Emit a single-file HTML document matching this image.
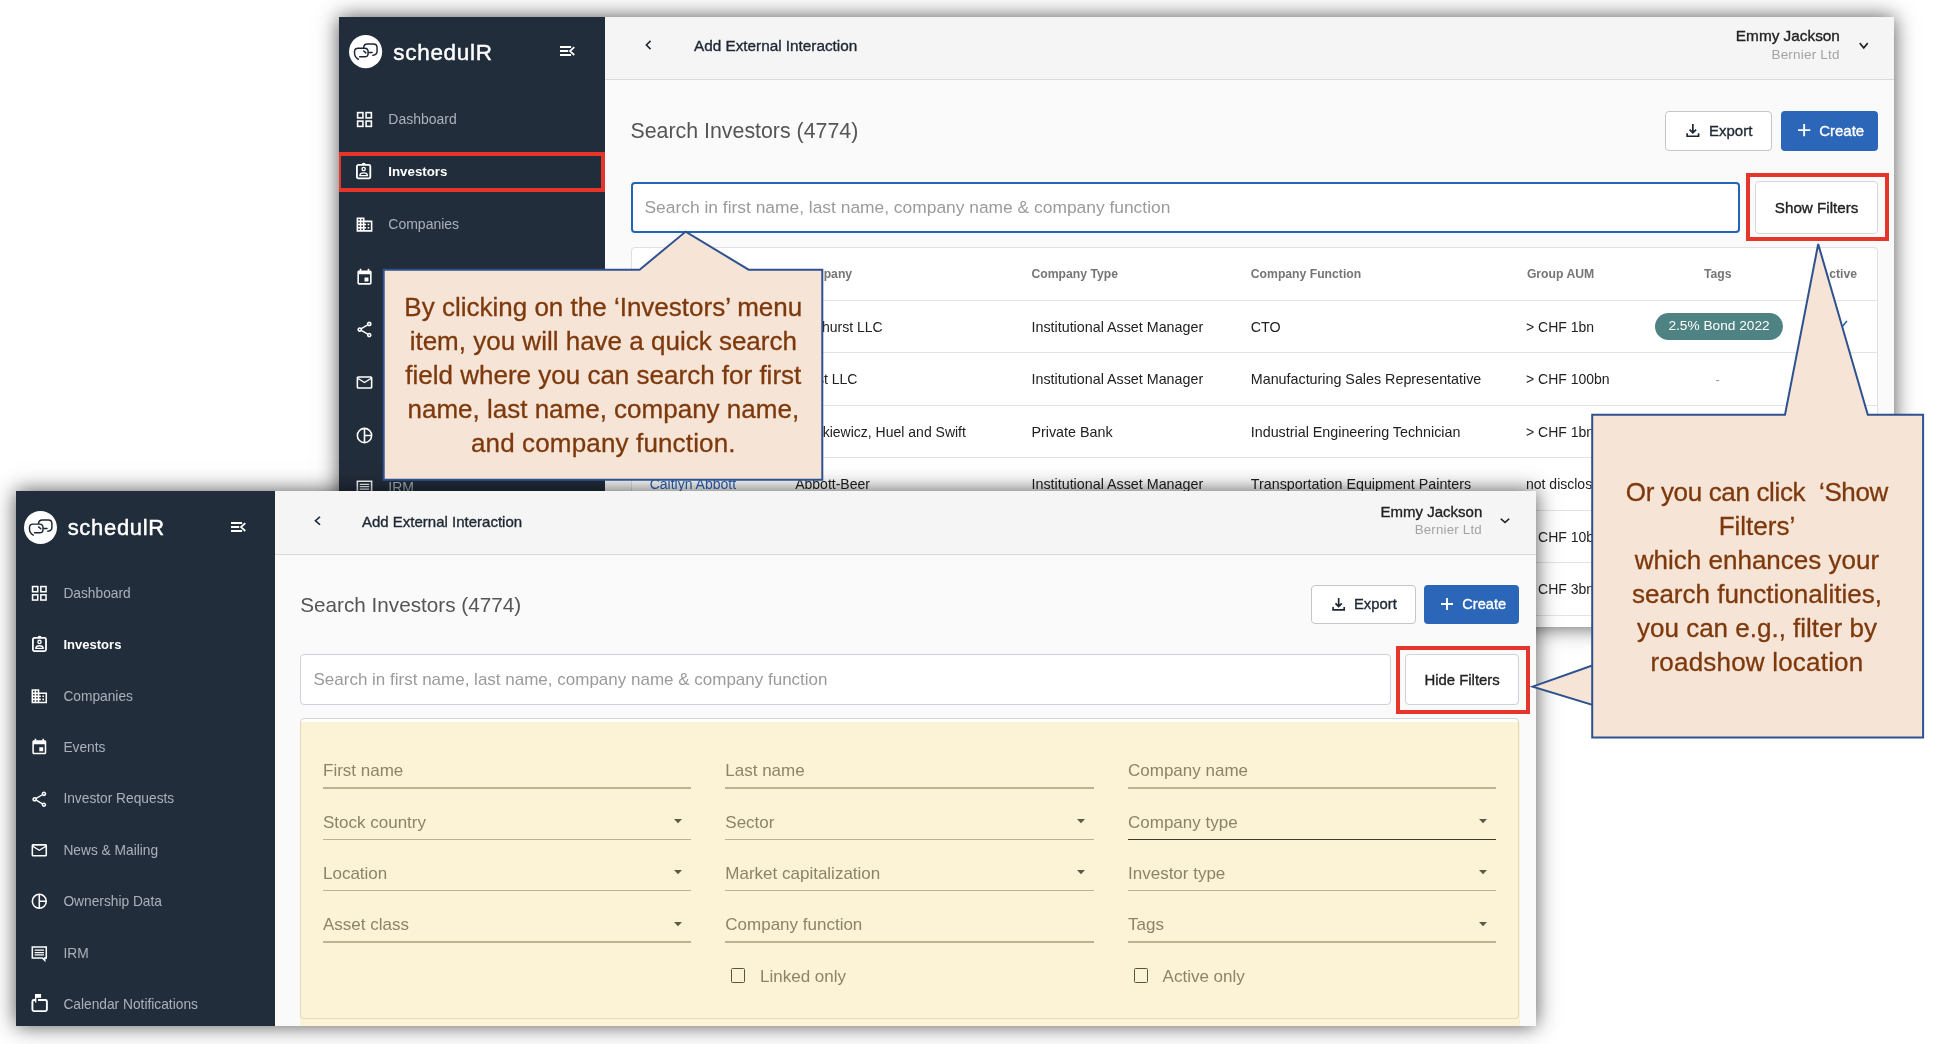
<!DOCTYPE html>
<html><head><meta charset="utf-8">
<style>
*{margin:0;padding:0;box-sizing:border-box}
html,body{width:1936px;height:1044px;overflow:hidden;background:#fff;font-family:"Liberation Sans",sans-serif}
.shot{position:absolute;overflow:hidden}
.inner{position:absolute;width:1936px;height:1044px;will-change:transform}
.a{position:absolute}
.t{position:absolute;line-height:1;white-space:nowrap;top:calc(var(--b)*1px - .8465em)}
.r{transform:translateX(-100%)}
.c{transform:translateX(-50%)}
.med{-webkit-text-stroke:.35px currentColor}
.side{background:#222d3b}
.nav{color:#aab1bb}
.navw{color:#fff;font-weight:bold}
.ico{position:absolute;overflow:visible}
.hdr{background:#f4f4f4;border-bottom:1px solid #dcdcdc}
.btn{position:absolute;border-radius:4px}
.th{font-weight:bold;color:#757575;font-size:12px}
.td{color:#212121;font-size:14px}
.rowline{position:absolute;height:1px;background:#e3e3e3}
.lbl{color:#8c8468;font-size:17px}
.ul{position:absolute;height:1px;background:#c9bf9f}
.red{position:absolute;border:4px solid #e5332a}
.callout{position:absolute;color:#7d390c;-webkit-text-stroke:.3px #7d390c;will-change:transform;font-size:26px;text-align:center;line-height:34px;font-family:"Liberation Sans",sans-serif}
</style></head>
<body>

<!-- ============ TOP SCREENSHOT ============ -->
<div class="shot" id="top" style="left:339px;top:17px;width:1555px;height:610px;box-shadow:0 0 20px rgba(0,0,0,.68);overflow:visible">
<div style="position:absolute;inset:0;overflow:hidden">
<div class="inner" style="left:-339px;top:-17px">
  <div class="a" style="left:604.5px;top:17px;width:1290px;height:610px;background:#fafafa"></div>
  <div class="a side" style="left:339px;top:17px;width:265.5px;height:610px"></div>
  <!--TOPSIDE-->
  <svg class="ico" style="left:348.6px;top:35.2px" width="33.2" height="33.2" viewBox="0 0 33 33"><circle cx="16.5" cy="16.5" r="16.5" fill="#fff"/><g fill="none" stroke="#1c2633" stroke-width="1.45" stroke-linecap="round"><path d="M9.3 24.1C6.8 22.8 5.5 20.5 5.5 18V16.6C5.5 14.5 7 13.1 9 13.1H15.5C17.5 13.1 19 14.6 19 16.6V18.4C19 20.4 17.6 21.7 15.6 21.7H10.6"/><path d="M14.5 12.6C14.7 10.3 16.2 8.9 18.3 8.9H24.3C26.4 8.9 27.9 10.4 27.9 12.5V16.4C27.9 18.4 26.2 19.9 23.8 20.2"/><path d="M19.8 17.4H23"/><path d="M14.6 15.9L16.8 17.8"/></g></svg>
  <div class="t" style="--b:60.7;left:393.3px;font-size:22.5px;color:#fff;letter-spacing:0.70px;-webkit-text-stroke:.45px #fff">schedulR</div>
  <svg class="ico" style="left:558.10px;top:45.40px" width="19" height="12.5" viewBox="-2 -2 19 12.5"><path d="M0 0H11.1M0 3.95H8.2M0 8.1H11.1" stroke="#fff" stroke-width="2"/><path d="M14.3 0.1L10 4.05L14.3 8" fill="none" stroke="#fff" stroke-width="1.7"/></svg>
  <svg class="ico" style="left:354.6px;top:110.0px" width="19" height="19" viewBox="0 0 24 24"><rect x="3.3" y="3.3" width="6.7" height="6.7" fill="none" stroke="#fff" stroke-width="2"/><rect x="14" y="3.3" width="6.7" height="6.7" fill="none" stroke="#fff" stroke-width="2"/><rect x="3.3" y="14" width="6.7" height="6.7" fill="none" stroke="#fff" stroke-width="2"/><rect x="14" y="14" width="6.7" height="6.7" fill="none" stroke="#fff" stroke-width="2"/></svg>
  <div class="t nav" style="--b:124.0;left:388.3px;font-size:14.00px">Dashboard</div>
  <svg class="ico" style="left:356.44px;top:163.01px" width="15.32" height="16.34" viewBox="0 0 15 16"><rect x="0.9" y="1.9" width="13.1" height="13.2" rx="1.5" fill="none" stroke="#fff" stroke-width="1.8"/><path d="M6 2a1.5 1.5 0 0 1 3 0" fill="none" stroke="#fff" stroke-width="1.3"/><circle cx="7.5" cy="5.9" r="1.6" fill="none" stroke="#fff" stroke-width="1.4"/><path d="M3.8 12.4c0-1.8 1.6-2.7 3.7-2.7s3.7 0.9 3.7 2.7z" fill="none" stroke="#fff" stroke-width="1.4" stroke-linejoin="round"/></svg>
  <div class="t navw" style="--b:176.0;left:388.3px;font-size:13.30px">Investors</div>
  <svg class="ico" style="left:354.6px;top:215.2px" width="19" height="19" viewBox="0 0 24 24"><path fill="#fff" d="M12 7V3H2v18h20V7H12zM6 19H4v-2h2v2zm0-4H4v-2h2v2zm0-4H4V9h2v2zm0-4H4V5h2v2zm4 12H8v-2h2v2zm0-4H8v-2h2v2zm0-4H8V9h2v2zm0-4H8V5h2v2zm10 12h-8v-2h2v-2h-2v-2h2v-2h-2V9h8v10zm-2-8h-2v2h2v-2zm0 4h-2v2h2v-2z"/></svg>
  <div class="t nav" style="--b:229.2;left:388.3px;font-size:14.00px">Companies</div>
  <svg class="ico" style="left:354.6px;top:267.8px" width="19" height="19" viewBox="0 0 24 24"><path fill="#fff" d="M17 12h-5v5h5v-5zM16 1v2H8V1H6v2H5c-1.11 0-1.99.9-1.99 2L3 19c0 1.1.89 2 2 2h14c1.1 0 2-.9 2-2V5c0-1.1-.9-2-2-2h-1V1h-2zm3 18H5V8h14v11z"/></svg>
  <div class="t nav" style="--b:281.8;left:388.3px;font-size:14.00px">Events</div>
  <svg class="ico" style="left:354.6px;top:320.4px" width="19" height="19" viewBox="0 0 24 24"><path fill="#fff" d="M18 16.08c-.76 0-1.44.3-1.960.77L8.91 12.7c.05-.23.09-.46.09-.7s-.04-.47-.09-.7l7.05-4.11c.54.5 1.25.81 2.04.81 1.66 0 3-1.34 3-3s-1.34-3-3-3-3 1.34-3 3c0 .24.04.47.09.7L8.04 9.81C7.5 9.31 6.79 9 6 9c-1.66 0-3 1.34-3 3s1.34 3 3 3c.79 0 1.5-.31 2.04-.81l7.12 4.16c-.05.21-.08.43-.08.65 0 1.61 1.31 2.92 2.92 2.92s2.92-1.31 2.92-2.92c0-1.610-1.31-2.92-2.92-2.92zM18 4c.55 0 1 .45 1 1s-.45 1-1 1-1-.45-1-1 .45-1 1-1zM6 13c-.55 0-1-.45-1-1s.45-1 1-1 1 .45 1 1-.45 1-1 1zm12 7.02c-.55 0-1-.45-1-1s.45-1 1-1 1 .45 1 1-.45 1-1 1z"/></svg>
  <div class="t nav" style="--b:334.4;left:388.3px;font-size:14.00px">Investor Requests</div>
  <svg class="ico" style="left:354.6px;top:373.0px" width="19" height="19" viewBox="0 0 24 24"><path fill="#fff" d="M22 6c0-1.1-.9-2-2-2H4c-1.1 0-2 .9-2 2v12c0 1.1.9 2 2 2h16c1.1 0 2-.9 2-2V6zm-2 0l-8 5-8-5h16zm0 12H4V8l8 5 8-5v10z"/></svg>
  <div class="t nav" style="--b:387.0;left:388.3px;font-size:14.00px">News &amp; Mailing</div>
  <svg class="ico" style="left:354.6px;top:425.6px" width="19" height="19" viewBox="0 0 24 24"><circle cx="12" cy="12" r="9" fill="none" stroke="#fff" stroke-width="2"/><path d="M12 3v18M12 12h9" stroke="#fff" stroke-width="2"/></svg>
  <div class="t nav" style="--b:439.6;left:388.3px;font-size:14.00px">Ownership Data</div>
  <svg class="ico" style="left:354.6px;top:478.2px" width="19" height="19" viewBox="0 0 24 24"><path fill="none" stroke="#fff" stroke-width="2" d="M3 4h18v14h-2v3l-3-3H3z"/><path d="M6 8h12M6 11h12M6 14h12" stroke="#fff" stroke-width="1.6"/></svg>
  <div class="t nav" style="--b:492.2;left:388.3px;font-size:14.00px">IRM</div>
  <svg class="ico" style="left:354.6px;top:527.9px" width="20" height="22" viewBox="0 0 20 22"><path d="M8 8H15.4a1.5 1.5 0 0 1 1.5 1.5V17.6a1.5 1.5 0 0 1-1.5 1.5H3.9a1.5 1.5 0 0 1-1.5-1.5V9.5a1.5 1.5 0 0 1 1.5-1.5H5.6" fill="none" stroke="#fff" stroke-width="1.9"/><path d="M5.65 2V10.5" stroke="#fff" stroke-width="1.4"/><rect x="5" y="2" width="6.1" height="3.8" fill="#fff"/></svg>
  <div class="t nav" style="--b:544.8;left:388.3px;font-size:14.00px">Calendar Notifications</div>
  <!--/TOPSIDE-->
  <!--TOPMAIN-->
  <div class="a" style="left:604.5px;top:17px;width:1289.5px;height:62.5px;background:#f5f5f5;border-bottom:1px solid #dadada"></div>
  <svg class="ico" style="left:645px;top:40px" width="6.5" height="10.0" viewBox="0 0 7 10" preserveAspectRatio="none"><path d="M6 0.8L1.5 5 6 9.2" fill="none" stroke="#1d2733" stroke-width="1.7"/></svg>
  <div class="t med" style="--b:51;left:694px;font-size:15.3px;color:#1d2733">Add External Interaction</div>
  <div class="t r med" style="--b:41.4;left:1839.9px;font-size:15.35px;color:#222">Emmy Jackson</div>
  <div class="t r " style="--b:59.1;left:1839.7px;font-size:13.5px;color:#a3a3a3;letter-spacing:.2px">Bernier Ltd</div>
  <svg class="ico" style="left:1858.5px;top:41.8px" width="9.5" height="7.6" viewBox="0 0 10 7" preserveAspectRatio="none"><path d="M0.8 1l4.2 4.5L9.2 1" fill="none" stroke="#222" stroke-width="1.7"/></svg>
  <div class="t " style="--b:139.3;left:630.5px;font-size:21.35px;color:#555">Search Investors (4774)</div>
  <div class="a" style="left:1665px;top:111px;width:107.0px;height:39.5px;background:#fff;border:1px solid #c6c6c6;border-radius:4px"></div>
  <svg class="ico" style="left:1686.17px;top:122.77px" width="13.70" height="14.42" viewBox="-1 -1 13.3 14"><path d="M5.65 0V8.6M2.5 5.4L5.65 8.6L8.8 5.4M0.1 8.9V11.9H11.2V8.9" fill="none" stroke="#1d2733" stroke-width="1.65" stroke-linejoin="miter"/></svg>
  <div class="t med" style="--b:136;left:1709px;font-size:15px;color:#1d2733">Export</div>
  <div class="a" style="left:1781px;top:111px;width:96.5px;height:39.5px;background:#2b66b9;border-radius:4px"></div>
  <svg class="ico" style="left:1797.65px;top:124.05px" width="12.3" height="12.3" viewBox="0 0 12 12"><path d="M6 0V12M0 6H12" stroke="#fff" stroke-width="1.85"/></svg>
  <div class="t med" style="--b:136;left:1819.2px;font-size:15px;color:#fff">Create</div>
  <div class="a" style="left:631.4px;top:181.6px;width:1108.8px;height:51.8px;background:#fff;border:2px solid #2563b7;border-radius:4px"></div>
  <div class="t " style="--b:214;left:644.5px;font-size:17.4px;color:#9b9b9b">Search in first name, last name, company name &amp; company function</div>
  <div class="a" style="left:1755px;top:181px;width:122.5px;height:52.6px;background:#fff;border:1px solid #d8d8d8;border-radius:4px"></div>
  <div class="t c med" style="--b:212.6;left:1816.6px;font-size:15.2px;color:#222">Show Filters</div>
  <div class="a" style="left:631px;top:247px;width:1246.5px;height:453.0px;background:#fff;border:1px solid #dde0e4;border-radius:4px"></div>
  <div class="t th" style="--b:278.5;left:650px;font-size:12.2px;">Name</div>
  <div class="t th" style="--b:278.5;left:796.6px;font-size:12.2px;">Company</div>
  <div class="t th" style="--b:278.5;left:1031.5px;font-size:12.2px;">Company Type</div>
  <div class="t th" style="--b:278.5;left:1250.8px;font-size:12.2px;">Company Function</div>
  <div class="t th" style="--b:278.5;left:1526.9px;font-size:12.2px;">Group AUM</div>
  <div class="t c th" style="--b:278.5;left:1717.7px;font-size:12.2px;">Tags</div>
  <div class="t r th" style="--b:278.5;left:1857px;font-size:12.2px;">Active</div>
  <div class="a" style="left:632px;top:299.7px;width:1245.0px;height:1.0px;background:#e3e3e3"></div>
  <div class="a" style="left:632px;top:352.2px;width:1245.0px;height:1.0px;background:#e3e3e3"></div>
  <div class="a" style="left:632px;top:404.7px;width:1245.0px;height:1.0px;background:#e3e3e3"></div>
  <div class="a" style="left:632px;top:457.2px;width:1245.0px;height:1.0px;background:#e3e3e3"></div>
  <div class="a" style="left:632px;top:509.7px;width:1245.0px;height:1.0px;background:#e3e3e3"></div>
  <div class="a" style="left:632px;top:562.2px;width:1245.0px;height:1.0px;background:#e3e3e3"></div>
  <div class="a" style="left:632px;top:614.7px;width:1245.0px;height:1.0px;background:#e3e3e3"></div>
  <div class="a" style="left:632px;top:667.2px;width:1245.0px;height:1.0px;background:#e3e3e3"></div>
  <div class="t td" style="--b:331.7;left:649.7px;font-size:14px;color:#2b63b5">Ashley Parkhurst</div>
  <div class="t r td" style="--b:331.7;left:882.7px;font-size:14px;">Ashhurst LLC</div>
  <div class="t td" style="--b:331.7;left:1031.5px;font-size:14.3px;">Institutional Asset Manager</div>
  <div class="t td" style="--b:331.7;left:1250.8px;font-size:14.3px;">CTO</div>
  <div class="t td" style="--b:331.7;left:1526px;font-size:14px;">&gt; CHF 1bn</div>
  <div class="a" style="left:1655px;top:312.9px;width:128.0px;height:26.7px;background:#4f8282;border-radius:14px"></div>
  <div class="t c " style="--b:330.9;left:1719px;font-size:13.7px;color:#fff">2.5% Bond 2022</div>
  <svg class="ico" style="left:1836px;top:319.5px" width="12" height="10" viewBox="0 0 12 10"><path d="M1 5l3.5 3.5L11 1" fill="none" stroke="#2b63b5" stroke-width="1.6"/></svg>
  <div class="t td" style="--b:384.2;left:649.7px;font-size:14px;color:#2b63b5">Ken Mayert</div>
  <div class="t r td" style="--b:384.2;left:857.4px;font-size:14px;">Kub &amp; West LLC</div>
  <div class="t td" style="--b:384.2;left:1031.5px;font-size:14.3px;">Institutional Asset Manager</div>
  <div class="t td" style="--b:384.2;left:1250.8px;font-size:14.3px;">Manufacturing Sales Representative</div>
  <div class="t td" style="--b:384.2;left:1526px;font-size:14px;">&gt; CHF 100bn</div>
  <div class="t c " style="--b:384.2;left:1717.7px;font-size:13px;color:#999">-</div>
  <div class="t td" style="--b:436.7;left:649.7px;font-size:14px;color:#2b63b5">Jo Stiedemann</div>
  <div class="t r td" style="--b:436.7;left:965.9px;font-size:14px;">Jaskiewicz, Huel and Swift</div>
  <div class="t td" style="--b:436.7;left:1031.5px;font-size:14.3px;">Private Bank</div>
  <div class="t td" style="--b:436.7;left:1250.8px;font-size:14.3px;">Industrial Engineering Technician</div>
  <div class="t td" style="--b:436.7;left:1526px;font-size:14px;">&gt; CHF 1bn</div>
  <div class="t td" style="--b:489.2;left:649.7px;font-size:14px;color:#2b63b5">Caitlyn Abbott</div>
  <div class="t td" style="--b:489.2;left:795.2px;font-size:14px;">Abbott-Beer</div>
  <div class="t td" style="--b:489.2;left:1031.5px;font-size:14.3px;">Institutional Asset Manager</div>
  <div class="t td" style="--b:489.2;left:1250.8px;font-size:14.3px;">Transportation Equipment Painters</div>
  <div class="t td" style="--b:489.2;left:1526px;font-size:14px;">not disclosed</div>
  <div class="t td" style="--b:541.7;left:649.7px;font-size:14px;color:#2b63b5">Lee Hills</div>
  <div class="t td" style="--b:541.7;left:795.2px;font-size:14px;">Hills Group</div>
  <div class="t td" style="--b:541.7;left:1031.5px;font-size:14.3px;">Private Bank</div>
  <div class="t td" style="--b:541.7;left:1250.8px;font-size:14.3px;">Chief Officer</div>
  <div class="t td" style="--b:541.7;left:1526px;font-size:14px;">&gt; CHF 10bn</div>
  <div class="t td" style="--b:594.2;left:649.7px;font-size:14px;color:#2b63b5">Ann Doyle</div>
  <div class="t td" style="--b:594.2;left:795.2px;font-size:14px;">Doyle Inc</div>
  <div class="t td" style="--b:594.2;left:1031.5px;font-size:14.3px;">Pension Fund</div>
  <div class="t td" style="--b:594.2;left:1250.8px;font-size:14.3px;">Analyst</div>
  <div class="t td" style="--b:594.2;left:1526px;font-size:14px;">&gt; CHF 3bn</div>
  <div class="a" style="left:336.8px;top:151.8px;width:268.2px;height:40.2px;border:4.3px solid #e6352a"></div>
  <div class="a" style="left:1745.8px;top:173.3px;width:142.9px;height:67.5px;border:4.1px solid #e6352a"></div>
  <!--/TOPMAIN-->
</div></div></div>

<!-- ============ BOTTOM SCREENSHOT ============ -->
<div class="shot" id="bot" style="left:16px;top:491px;width:1520px;height:535px;box-shadow:0 0 20px rgba(0,0,0,.68);overflow:visible">
<div style="position:absolute;inset:0;overflow:hidden">
<div class="inner" style="left:-16px;top:-491px">
  <div class="a" style="left:274.5px;top:491px;width:1262px;height:535px;background:#fafafa"></div>
  <div class="a side" style="left:16px;top:491px;width:258.5px;height:535px"></div>
  <!--BOTSIDE-->
  <svg class="ico" style="left:24.2px;top:510.7px" width="33" height="33" viewBox="0 0 33 33"><circle cx="16.5" cy="16.5" r="16.5" fill="#fff"/><g fill="none" stroke="#1c2633" stroke-width="1.45" stroke-linecap="round"><path d="M9.3 24.1C6.8 22.8 5.5 20.5 5.5 18V16.6C5.5 14.5 7 13.1 9 13.1H15.5C17.5 13.1 19 14.6 19 16.6V18.4C19 20.4 17.6 21.7 15.6 21.7H10.6"/><path d="M14.5 12.6C14.7 10.3 16.2 8.9 18.3 8.9H24.3C26.4 8.9 27.9 10.4 27.9 12.5V16.4C27.9 18.4 26.2 19.9 23.8 20.2"/><path d="M19.8 17.4H23"/><path d="M14.6 15.9L16.8 17.8"/></g></svg>
  <div class="t" style="--b:535.5;left:67.7px;font-size:22.0px;color:#fff;letter-spacing:0.68px;-webkit-text-stroke:.45px #fff">schedulR</div>
  <svg class="ico" style="left:228.90px;top:520.90px" width="19" height="12.5" viewBox="-2 -2 19 12.5"><path d="M0 0H11.1M0 3.95H8.2M0 8.1H11.1" stroke="#fff" stroke-width="2"/><path d="M14.3 0.1L10 4.05L14.3 8" fill="none" stroke="#fff" stroke-width="1.7"/></svg>
  <svg class="ico" style="left:30.2px;top:583.9px" width="18.6" height="18.6" viewBox="0 0 24 24"><rect x="3.3" y="3.3" width="6.7" height="6.7" fill="none" stroke="#fff" stroke-width="2"/><rect x="14" y="3.3" width="6.7" height="6.7" fill="none" stroke="#fff" stroke-width="2"/><rect x="3.3" y="14" width="6.7" height="6.7" fill="none" stroke="#fff" stroke-width="2"/><rect x="14" y="14" width="6.7" height="6.7" fill="none" stroke="#fff" stroke-width="2"/></svg>
  <div class="t nav" style="--b:598.4;left:63.4px;font-size:13.75px">Dashboard</div>
  <svg class="ico" style="left:32.00px;top:635.70px" width="15.00" height="16.00" viewBox="0 0 15 16"><rect x="0.9" y="1.9" width="13.1" height="13.2" rx="1.5" fill="none" stroke="#fff" stroke-width="1.8"/><path d="M6 2a1.5 1.5 0 0 1 3 0" fill="none" stroke="#fff" stroke-width="1.3"/><circle cx="7.5" cy="5.9" r="1.6" fill="none" stroke="#fff" stroke-width="1.4"/><path d="M3.8 12.4c0-1.8 1.6-2.7 3.7-2.7s3.7 0.9 3.7 2.7z" fill="none" stroke="#fff" stroke-width="1.4" stroke-linejoin="round"/></svg>
  <div class="t navw" style="--b:649.2;left:63.4px;font-size:13.06px">Investors</div>
  <svg class="ico" style="left:30.2px;top:686.7px" width="18.6" height="18.6" viewBox="0 0 24 24"><path fill="#fff" d="M12 7V3H2v18h20V7H12zM6 19H4v-2h2v2zm0-4H4v-2h2v2zm0-4H4V9h2v2zm0-4H4V5h2v2zm4 12H8v-2h2v2zm0-4H8v-2h2v2zm0-4H8V9h2v2zm0-4H8V5h2v2zm10 12h-8v-2h2v-2h-2v-2h2v-2h-2V9h8v10zm-2-8h-2v2h2v-2zm0 4h-2v2h2v-2z"/></svg>
  <div class="t nav" style="--b:701.2;left:63.4px;font-size:13.75px">Companies</div>
  <svg class="ico" style="left:30.2px;top:738.1px" width="18.6" height="18.6" viewBox="0 0 24 24"><path fill="#fff" d="M17 12h-5v5h5v-5zM16 1v2H8V1H6v2H5c-1.11 0-1.99.9-1.99 2L3 19c0 1.1.89 2 2 2h14c1.1 0 2-.9 2-2V5c0-1.1-.9-2-2-2h-1V1h-2zm3 18H5V8h14v11z"/></svg>
  <div class="t nav" style="--b:752.6;left:63.4px;font-size:13.75px">Events</div>
  <svg class="ico" style="left:30.2px;top:789.5px" width="18.6" height="18.6" viewBox="0 0 24 24"><path fill="#fff" d="M18 16.08c-.76 0-1.44.3-1.960.77L8.91 12.7c.05-.23.09-.46.09-.7s-.04-.47-.09-.7l7.05-4.11c.54.5 1.25.81 2.04.81 1.66 0 3-1.34 3-3s-1.34-3-3-3-3 1.34-3 3c0 .24.04.47.09.7L8.04 9.81C7.5 9.31 6.79 9 6 9c-1.66 0-3 1.34-3 3s1.34 3 3 3c.79 0 1.5-.31 2.04-.81l7.12 4.16c-.05.21-.08.43-.08.65 0 1.61 1.31 2.92 2.92 2.92s2.92-1.31 2.92-2.92c0-1.610-1.31-2.92-2.92-2.92zM18 4c.55 0 1 .45 1 1s-.45 1-1 1-1-.45-1-1 .45-1 1-1zM6 13c-.55 0-1-.45-1-1s.45-1 1-1 1 .45 1 1-.45 1-1 1zm12 7.02c-.55 0-1-.45-1-1s.45-1 1-1 1 .45 1 1-.45 1-1 1z"/></svg>
  <div class="t nav" style="--b:804.0;left:63.4px;font-size:13.75px">Investor Requests</div>
  <svg class="ico" style="left:30.2px;top:840.9px" width="18.6" height="18.6" viewBox="0 0 24 24"><path fill="#fff" d="M22 6c0-1.1-.9-2-2-2H4c-1.1 0-2 .9-2 2v12c0 1.1.9 2 2 2h16c1.1 0 2-.9 2-2V6zm-2 0l-8 5-8-5h16zm0 12H4V8l8 5 8-5v10z"/></svg>
  <div class="t nav" style="--b:855.4;left:63.4px;font-size:13.75px">News &amp; Mailing</div>
  <svg class="ico" style="left:30.2px;top:892.3px" width="18.6" height="18.6" viewBox="0 0 24 24"><circle cx="12" cy="12" r="9" fill="none" stroke="#fff" stroke-width="2"/><path d="M12 3v18M12 12h9" stroke="#fff" stroke-width="2"/></svg>
  <div class="t nav" style="--b:906.8;left:63.4px;font-size:13.75px">Ownership Data</div>
  <svg class="ico" style="left:30.2px;top:943.7px" width="18.6" height="18.6" viewBox="0 0 24 24"><path fill="none" stroke="#fff" stroke-width="2" d="M3 4h18v14h-2v3l-3-3H3z"/><path d="M6 8h12M6 11h12M6 14h12" stroke="#fff" stroke-width="1.6"/></svg>
  <div class="t nav" style="--b:958.2;left:63.4px;font-size:13.75px">IRM</div>
  <svg class="ico" style="left:30.0px;top:992.0px" width="20" height="22" viewBox="0 0 20 22"><path d="M8 8H15.4a1.5 1.5 0 0 1 1.5 1.5V17.6a1.5 1.5 0 0 1-1.5 1.5H3.9a1.5 1.5 0 0 1-1.5-1.5V9.5a1.5 1.5 0 0 1 1.5-1.5H5.6" fill="none" stroke="#fff" stroke-width="1.9"/><path d="M5.65 2V10.5" stroke="#fff" stroke-width="1.4"/><rect x="5" y="2" width="6.1" height="3.8" fill="#fff"/></svg>
  <div class="t nav" style="--b:1009.6;left:63.4px;font-size:13.75px">Calendar Notifications</div>
  <!--/BOTSIDE-->
  <!--BOTMAIN-->
  <div class="a" style="left:274.5px;top:491px;width:1261.5px;height:64.0px;background:#f5f5f5;border-bottom:1px solid #dadada"></div>
  <svg class="ico" style="left:314px;top:516px" width="7.0" height="9.5" viewBox="0 0 7 10" preserveAspectRatio="none"><path d="M6 0.8L1.5 5 6 9.2" fill="none" stroke="#1d2733" stroke-width="1.7"/></svg>
  <div class="t med" style="--b:526.6;left:362px;font-size:15px;color:#1d2733">Add External Interaction</div>
  <div class="t r med" style="--b:516.7;left:1482.3px;font-size:15px;color:#222">Emmy Jackson</div>
  <div class="t r " style="--b:534;left:1481.9px;font-size:13.3px;color:#a3a3a3;letter-spacing:.2px">Bernier Ltd</div>
  <svg class="ico" style="left:1500px;top:518.3px" width="10.0" height="5.8" viewBox="0 0 10 7" preserveAspectRatio="none"><path d="M0.8 1l4.2 4.5L9.2 1" fill="none" stroke="#222" stroke-width="1.7"/></svg>
  <div class="t " style="--b:612.2;left:300.3px;font-size:20.7px;color:#555">Search Investors (4774)</div>
  <div class="a" style="left:1311.1px;top:585.2px;width:104.6px;height:38.4px;background:#fff;border:1px solid #c6c6c6;border-radius:4px"></div>
  <svg class="ico" style="left:1332.20px;top:596.50px" width="13.30" height="14.00" viewBox="-1 -1 13.3 14"><path d="M5.65 0V8.6M2.5 5.4L5.65 8.6L8.8 5.4M0.1 8.9V11.9H11.2V8.9" fill="none" stroke="#1d2733" stroke-width="1.65" stroke-linejoin="miter"/></svg>
  <div class="t med" style="--b:609.6;left:1354px;font-size:14.8px;color:#1d2733">Export</div>
  <div class="a" style="left:1424px;top:585.2px;width:95.0px;height:38.4px;background:#2b66b9;border-radius:4px"></div>
  <svg class="ico" style="left:1440.80px;top:597.80px" width="12" height="12" viewBox="0 0 12 12"><path d="M6 0V12M0 6H12" stroke="#fff" stroke-width="1.90"/></svg>
  <div class="t med" style="--b:609.6;left:1462.3px;font-size:14.6px;color:#fff">Create</div>
  <div class="a" style="left:300.2px;top:654.2px;width:1090.9px;height:50.8px;background:#fff;border:1px solid #cfd2d8;border-radius:4px"></div>
  <div class="t " style="--b:685.3;left:313.5px;font-size:17px;color:#9b9b9b">Search in first name, last name, company name &amp; company function</div>
  <div class="a" style="left:1404.9px;top:654.1px;width:114.3px;height:50.9px;background:#fff;border:1px solid #cfd2d8;border-radius:4px"></div>
  <div class="t c med" style="--b:685.2;left:1462.1px;font-size:14.9px;color:#222">Hide Filters</div>
  <div class="a" style="left:299.9px;top:718.4px;width:1219.3px;height:321.6px;background:#fff;border:1px solid #d2d5da;border-radius:4px"></div>
  <div class="a" style="left:299.9px;top:722px;width:1220.1px;height:304.0px;background:#fcf3d6"></div>
  <div class="a" style="left:299.9px;top:722px;width:1219.3px;height:297.2px;border:1px solid #e2d9bd;border-top:none;border-radius:0 0 4px 4px"></div>
  <div class="t lbl" style="--b:776.8;left:323px;font-size:17px;">First name</div>
  <div class="a" style="left:323px;top:787.0px;width:368.4px;height:1.6px;background:#bcb190"></div>
  <div class="t lbl" style="--b:776.8;left:725.3px;font-size:17px;">Last name</div>
  <div class="a" style="left:725.3px;top:787.0px;width:368.4px;height:1.6px;background:#bcb190"></div>
  <div class="t lbl" style="--b:776.8;left:1128px;font-size:17px;">Company name</div>
  <div class="a" style="left:1128px;top:787.0px;width:368.4px;height:1.6px;background:#bcb190"></div>
  <div class="t lbl" style="--b:828;left:323px;font-size:17px;">Stock country</div>
  <div class="a" style="left:323px;top:838.8px;width:368.4px;height:1.6px;background:#bcb190"></div>
  <svg class="ico" style="left:674.2px;top:819.3px" width="8" height="4.3" viewBox="0 0 10 5" preserveAspectRatio="none"><path d="M0 0h10L5 5z" fill="#5a5a47"/></svg>
  <div class="t lbl" style="--b:828;left:725.3px;font-size:17px;">Sector</div>
  <div class="a" style="left:725.3px;top:838.8px;width:368.4px;height:1.6px;background:#bcb190"></div>
  <svg class="ico" style="left:1076.5px;top:819.3px" width="8" height="4.3" viewBox="0 0 10 5" preserveAspectRatio="none"><path d="M0 0h10L5 5z" fill="#5a5a47"/></svg>
  <div class="t lbl" style="--b:828;left:1128px;font-size:17px;">Company type</div>
  <div class="a" style="left:1128px;top:838.8px;width:368.4px;height:1.6px;background:#3d3a30"></div>
  <svg class="ico" style="left:1479.2px;top:819.3px" width="8" height="4.3" viewBox="0 0 10 5" preserveAspectRatio="none"><path d="M0 0h10L5 5z" fill="#5a5a47"/></svg>
  <div class="t lbl" style="--b:879.2;left:323px;font-size:17px;">Location</div>
  <div class="a" style="left:323px;top:889.6999999999999px;width:368.4px;height:1.6px;background:#bcb190"></div>
  <svg class="ico" style="left:674.2px;top:870.1999999999999px" width="8" height="4.3" viewBox="0 0 10 5" preserveAspectRatio="none"><path d="M0 0h10L5 5z" fill="#5a5a47"/></svg>
  <div class="t lbl" style="--b:879.2;left:725.3px;font-size:17px;">Market capitalization</div>
  <div class="a" style="left:725.3px;top:889.6999999999999px;width:368.4px;height:1.6px;background:#bcb190"></div>
  <svg class="ico" style="left:1076.5px;top:870.1999999999999px" width="8" height="4.3" viewBox="0 0 10 5" preserveAspectRatio="none"><path d="M0 0h10L5 5z" fill="#5a5a47"/></svg>
  <div class="t lbl" style="--b:879.2;left:1128px;font-size:17px;">Investor type</div>
  <div class="a" style="left:1128px;top:889.6999999999999px;width:368.4px;height:1.6px;background:#bcb190"></div>
  <svg class="ico" style="left:1479.2px;top:870.1999999999999px" width="8" height="4.3" viewBox="0 0 10 5" preserveAspectRatio="none"><path d="M0 0h10L5 5z" fill="#5a5a47"/></svg>
  <div class="t lbl" style="--b:930;left:323px;font-size:17px;">Asset class</div>
  <div class="a" style="left:323px;top:941.4px;width:368.4px;height:1.6px;background:#bcb190"></div>
  <svg class="ico" style="left:674.2px;top:921.9px" width="8" height="4.3" viewBox="0 0 10 5" preserveAspectRatio="none"><path d="M0 0h10L5 5z" fill="#5a5a47"/></svg>
  <div class="t lbl" style="--b:930;left:725.3px;font-size:17px;">Company function</div>
  <div class="a" style="left:725.3px;top:941.4px;width:368.4px;height:1.6px;background:#bcb190"></div>
  <div class="t lbl" style="--b:930;left:1128px;font-size:17px;">Tags</div>
  <div class="a" style="left:1128px;top:941.4px;width:368.4px;height:1.6px;background:#bcb190"></div>
  <svg class="ico" style="left:1479.2px;top:921.9px" width="8" height="4.3" viewBox="0 0 10 5" preserveAspectRatio="none"><path d="M0 0h10L5 5z" fill="#5a5a47"/></svg>
  <div class="a" style="left:730.9px;top:968.3px;width:14.5px;height:14.3px;border:1.7px solid #56553f;border-radius:1.5px"></div>
  <div class="t lbl" style="--b:982.6;left:760.0px;font-size:17px;">Linked only</div>
  <div class="a" style="left:1133.5px;top:968.3px;width:14.5px;height:14.3px;border:1.7px solid #56553f;border-radius:1.5px"></div>
  <div class="t lbl" style="--b:982.6;left:1162.6px;font-size:17px;">Active only</div>
  <div class="a" style="left:1396px;top:646px;width:134.0px;height:68.0px;border:4px solid #e6352a"></div>
  <!--/BOTMAIN-->
</div></div></div>

<!--CALLOUTS-->
<svg class="a" style="left:0;top:0" width="1936" height="1044" viewBox="0 0 1936 1044"><polygon points="383.7,269.7 639.6,269.7 685.7,231.6 748.6,269.7 822.3,269.7 822.3,479.7 383.7,479.7" fill="#f6e4d7" stroke="#2f528f" stroke-width="2" stroke-linejoin="miter"/><polygon points="1600,662.7 1532.7,686.6 1600,707.1" fill="#f6e4d7" stroke="#2f528f" stroke-width="2" stroke-linejoin="miter"/><polygon points="1592.2,414.75 1785,414.75 1818.2,244 1867.8,414.75 1923.1,414.75 1923.1,737.4 1592.2,737.4" fill="#f6e4d7" stroke="#2f528f" stroke-width="2" stroke-linejoin="miter"/></svg>
<div class="callout" style="left:383.7px;top:290.2px;width:438.6px">By clicking on the ‘Investors’ menu<br>item, you will have a quick search<br>field where you can search for first<br>name, last name, company name,<br><span style="letter-spacing:.15px">and company function.</span></div>
<div class="callout" style="left:1591.4px;top:474.6px;width:331.9px"><span style="letter-spacing:-.35px">Or you can click&nbsp; ‘Show</span><br>Filters’<br>which enhances your<br>search functionalities,<br>you can e.g., filter by<br><span style="letter-spacing:.2px">roadshow location</span></div>
<!--/CALLOUTS-->
</body></html>
